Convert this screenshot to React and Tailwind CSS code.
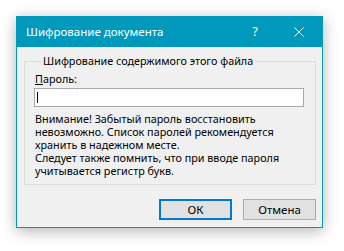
import React from "react";

const font = { fontFamily: '"Noto Sans", "DejaVu Sans", sans-serif' };

const App = () => {
  return (
    <div className="h-[251px] w-[344px] bg-white pl-[16px] pt-[16px]" style={font}>
      <div className="flex h-[212px] w-[307px] flex-col shadow-[0_3px_14px_rgba(0,0,0,0.3)]">
        {/* title bar */}
        <div className="flex h-[31px] items-center bg-[#0099bc] pl-[10px] text-white">
          <span className="flex-1 text-[11.5px] leading-none">Шифрование документа</span>
          <span className="w-[14px] text-center text-[12px] leading-none">?</span>
          <span className="ml-[32px] mr-[19px] flex h-[10px] w-[10px] items-center justify-center">
            <svg width="10" height="10" viewBox="0 0 10 10">
              <path d="M0.5 0.5 L9.5 9.5 M9.5 0.5 L0.5 9.5" stroke="white" strokeWidth="1" fill="none" />
            </svg>
          </span>
        </div>

        {/* body */}
        <div className="flex flex-1 flex-col border-x border-b border-[#0099bc] bg-[#f0f0f0] pl-[7px] pr-[6px] pt-[6px] text-[10.8px] leading-[13px] text-black">
          <fieldset className="h-[132px] border border-[#dcdcdc] px-[10px] pb-[5px]">
            <legend className="ml-[6px] px-[2px] leading-[16px]">Шифрование содержимого этого файла</legend>
            <div className="mt-[2px] leading-[15px]">
              <span className="underline">П</span>ароль:
            </div>
            <div className="-ml-px mt-[2px] flex h-[19px] w-[270px] items-center border border-[#a8a8a8] bg-white pl-[2px]">
              <span className="h-[11px] w-px bg-black" />
            </div>
            <div className="mt-[5px] flex flex-col">
              <span>Внимание! Забытый пароль восстановить</span>
              <span>невозможно. Список паролей рекомендуется</span>
              <span>хранить в надежном месте.</span>
              <span>Следует также помнить, что при вводе пароля</span>
              <span>учитывается регистр букв.</span>
            </div>
          </fieldset>

          <div className="mt-[14px] flex justify-end gap-[11px]">
            <button className="h-[21px] w-[73px] border-2 border-[#0078d7] bg-[#e1e1e1] text-[11.5px] leading-none">
              ОК
            </button>
            <button className="h-[21px] w-[73px] border border-[#adadad] bg-[#e1e1e1] text-[11.5px] leading-none">
              Отмена
            </button>
          </div>
        </div>
      </div>
    </div>
  );
};

export default App;
